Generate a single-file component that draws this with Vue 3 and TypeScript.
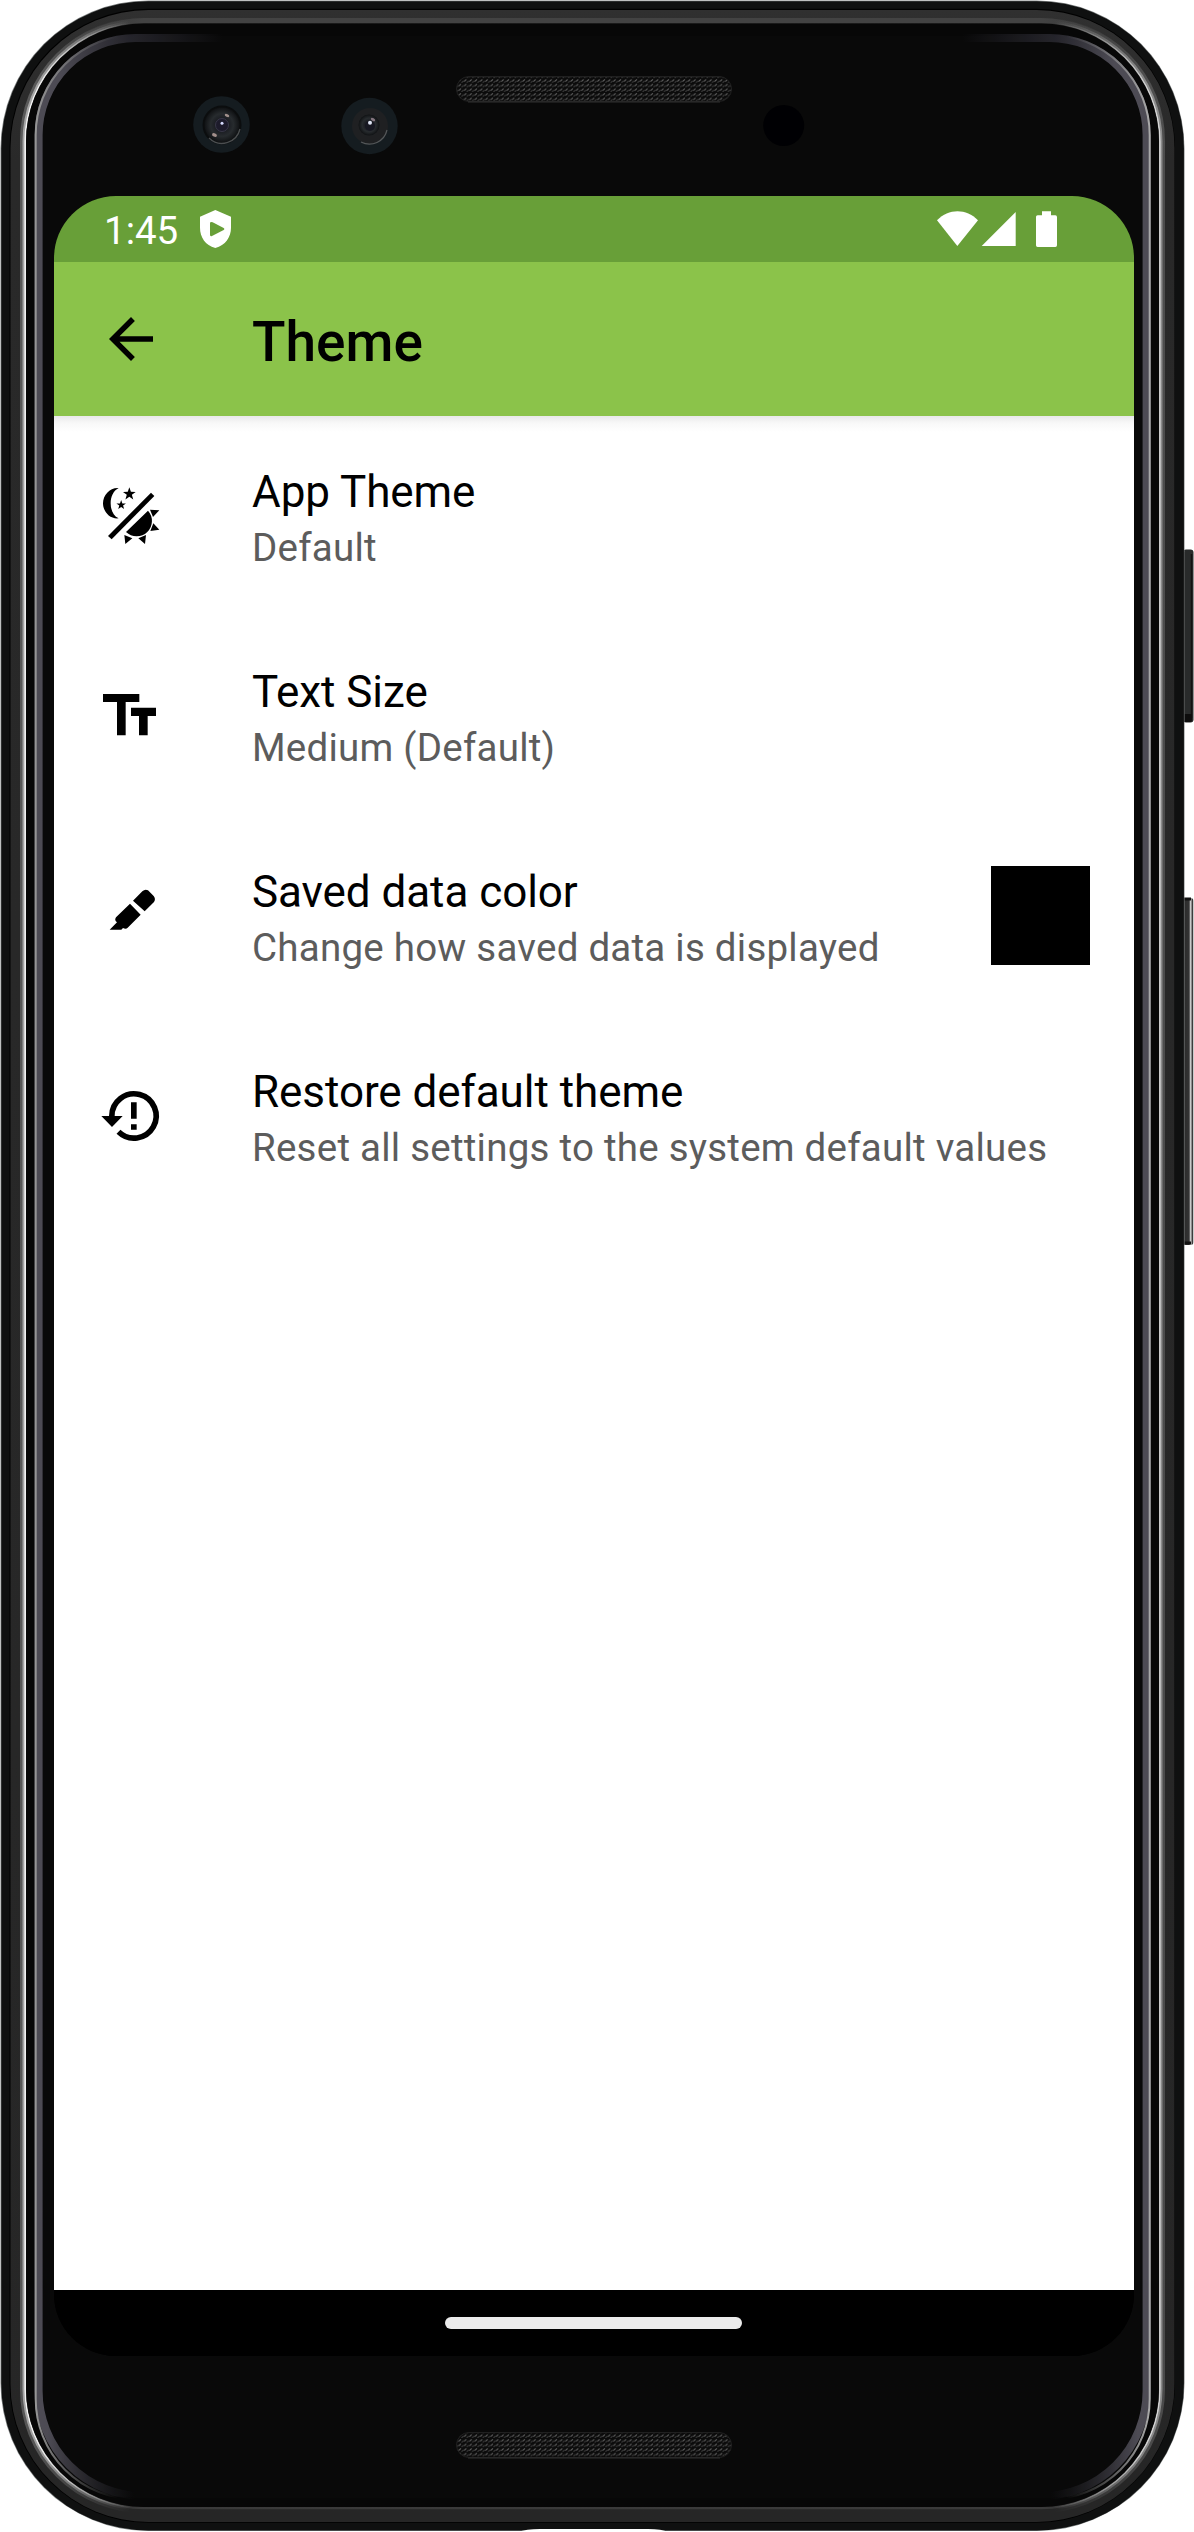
<script setup lang="ts">
interface Preference {
  id: string
  title: string
  summary: string
  swatch?: string
}

const preferences: Preference[] = [
  { id: 'theme', title: 'App Theme', summary: 'Default' },
  { id: 'text', title: 'Text Size', summary: 'Medium (Default)' },
  { id: 'color', title: 'Saved data color', summary: 'Change how saved data is displayed', swatch: '#000000' },
  { id: 'restore', title: 'Restore default theme', summary: 'Reset all settings to the system default values' },
]

const star = (cx: number, cy: number, r: number): string =>
  Array.from({ length: 10 }, (_, i) => {
    const radius = i % 2 === 0 ? r : r * 0.4
    const angle = -Math.PI / 2 + (i * Math.PI) / 5
    return `${(cx + radius * Math.cos(angle)).toFixed(2)},${(cy + radius * Math.sin(angle)).toFixed(2)}`
  }).join(' ')
</script>

<template>
  <div class="device">
    <svg class="hardware" viewBox="0 0 1194 2532" width="1194" height="2532" aria-hidden="true">
      <defs>
        <linearGradient id="edgeShine" gradientUnits="userSpaceOnUse" x1="0" y1="0" x2="1185" y2="0">
          <stop offset="0" stop-color="#fff" stop-opacity="0.95" />
          <stop offset="0.03" stop-color="#fff" stop-opacity="0.9" />
          <stop offset="0.11" stop-color="#fff" stop-opacity="0" />
          <stop offset="0.89" stop-color="#fff" stop-opacity="0" />
          <stop offset="0.97" stop-color="#fff" stop-opacity="0.7" />
          <stop offset="1" stop-color="#fff" stop-opacity="0.7" />
        </linearGradient>
        <linearGradient id="railTop" gradientUnits="userSpaceOnUse" x1="0" y1="0" x2="1185" y2="0">
          <stop offset="0.05" stop-color="#434343" stop-opacity="0" />
          <stop offset="0.12" stop-color="#434343" />
          <stop offset="0.88" stop-color="#434343" />
          <stop offset="0.95" stop-color="#434343" stop-opacity="0" />
        </linearGradient>
        <linearGradient id="glassTop" gradientUnits="userSpaceOnUse" x1="0" y1="0" x2="1185" y2="0">
          <stop offset="0.05" stop-color="#55535d" />
          <stop offset="0.11" stop-color="#302f38" stop-opacity="0.8" />
          <stop offset="0.19" stop-color="#302f38" stop-opacity="0" />
          <stop offset="0.81" stop-color="#302f38" stop-opacity="0" />
          <stop offset="0.89" stop-color="#302f38" stop-opacity="0.8" />
          <stop offset="0.94" stop-color="#55535d" />
        </linearGradient>
        <linearGradient id="glassBottom" gradientUnits="userSpaceOnUse" x1="0" y1="0" x2="1185" y2="0">
          <stop offset="0.04" stop-color="#55535d" />
          <stop offset="0.115" stop-color="#302f38" stop-opacity="0" />
          <stop offset="0.885" stop-color="#302f38" stop-opacity="0" />
          <stop offset="0.96" stop-color="#55535d" />
        </linearGradient>
        <linearGradient id="glassShine" gradientUnits="userSpaceOnUse" x1="0" y1="0" x2="1185" y2="0">
          <stop offset="0.03" stop-color="#a5a5a5" />
          <stop offset="0.1" stop-color="#777" stop-opacity="0" />
          <stop offset="0.9" stop-color="#999" stop-opacity="0" />
          <stop offset="0.97" stop-color="#bbb" />
        </linearGradient>
        <linearGradient id="rail" x1="0" y1="0" x2="0" y2="1">
          <stop offset="0" stop-color="#303030" />
          <stop offset="0.06" stop-color="#292929" />
          <stop offset="1" stop-color="#262626" />
        </linearGradient>
        <linearGradient id="volumeKey" x1="0" y1="0" x2="1" y2="0">
          <stop offset="0" stop-color="#2a2a2a" />
          <stop offset="0.58" stop-color="#333" />
          <stop offset="0.72" stop-color="#d0d0d0" />
          <stop offset="0.84" stop-color="#777" />
          <stop offset="0.86" stop-color="#111" />
          <stop offset="1" stop-color="#999" />
        </linearGradient>
        <radialGradient id="lens">
          <stop offset="0" stop-color="#3a3d4c" />
          <stop offset="0.3" stop-color="#181a20" />
          <stop offset="0.65" stop-color="#272b2e" />
          <stop offset="1" stop-color="#101214" />
        </radialGradient>
        <pattern id="mesh" width="5.33" height="4.6" patternUnits="userSpaceOnUse">
          <rect width="5.33" height="4.6" fill="#0b0b0b" />
          <path d="M0.4 3.4 L2.6 1.2" stroke="#666" stroke-width="1.1" />
          <path d="M3.1 4.6 L5 2.7" stroke="#3a3a3a" stroke-width="1.1" />
        </pattern>
      </defs>

      <rect x="1183" y="549.5" width="10.5" height="173" rx="3" fill="#292b2b" />
      <path d="M1184 552v168" stroke="#191919" stroke-width="2" />
      <path d="M1191.5 554v164" stroke="#111" stroke-width="1.4" />
      <path d="M1184 714h8v6q0 2-2 2h-6z" fill="#0d0d0d" />
      <rect x="1183" y="898" width="10.5" height="347" rx="3" fill="url(#volumeKey)" />
      <path d="M1184 899h7M1184 1243h7" stroke="#111" stroke-width="3" />

      <rect x="0.5" y="0.5" width="1184" height="2530.5" rx="148" fill="#7d8080" />
      <rect x="1.3" y="1.2" width="1182.6" height="2529.2" rx="147" fill="#0f1010" />
      <rect x="9.5" y="8.8" width="1165.5" height="2514" rx="139" fill="#000" />
      <rect x="10.5" y="10" width="1164" height="2512" rx="138" fill="url(#rail)" />
      <g fill="none" stroke="url(#railTop)">
        <path d="M23.500 1266V141.500A121 121 0 0 1 144.500 20.500H1040.500A121 121 0 0 1 1161.500 141.500V1266" stroke-width="5" />
        <path d="M25 1266V2389A119 119 0 0 0 144 2508H1041A119 119 0 0 0 1160 2389V1266" stroke-width="2.4" opacity="0.7" />
      </g>
      <g fill="none" stroke="url(#edgeShine)">
        <rect x="22.5" y="20" width="1140" height="2490.5" rx="121" stroke-width="5" opacity="0.24" />
        <rect x="24" y="21.5" width="1137" height="2487.5" rx="120" stroke-width="3" opacity="0.5" />
        <rect x="25.2" y="22.8" width="1134.6" height="2485" rx="119" stroke-width="1.6" />
      </g>
      <rect x="26" y="23.5" width="1133" height="2483.5" rx="118" fill="#070707" />
      <rect x="36" y="36" width="1114" height="2462" rx="98" fill="#090909" />
      <g fill="none" class="glass">
        <path d="M38.600 1266V135A97 97 0 0 1 135.600 38H1049.600A97 97 0 0 1 1146.600 135V1266" stroke="url(#glassTop)" stroke-width="8" />
        <path d="M38.600 1266V2391A105 105 0 0 0 143.600 2496H1041.600A105 105 0 0 0 1146.600 2391V1266" stroke="url(#glassBottom)" stroke-width="8" />
        <rect x="35.7" y="35" width="1114" height="2464" rx="100" stroke="url(#glassShine)" stroke-width="2" />
      </g>
      <path d="M518 2532q8-3 22-3h108q14 0 20 3z" fill="#fff" />

      <g stroke="#202020" fill="url(#mesh)">
        <rect x="456.5" y="76.5" width="275" height="25" rx="12.5" />
        <rect x="456.5" y="2432.5" width="275" height="25" rx="12.5" />
      </g>
      <path d="M468 102H720M468 2458H720" stroke="#303030" />

      <g>
        <circle cx="221.5" cy="124.5" r="28.3" fill="#151c20" />
        <circle cx="222" cy="125" r="19.5" fill="#0b0d0e" />
        <circle cx="222" cy="125" r="17.5" fill="url(#lens)" />
        <path d="M209 138a18.5 18.5 0 0 0 31-9" fill="none" stroke="#4b4e50" stroke-width="1.4" />
        <circle cx="222" cy="125" r="6.5" fill="#1d1b2b" stroke="#383748" />
        <ellipse cx="227" cy="115.5" rx="2.4" ry="1.3" fill="#a08f8b" transform="rotate(25 227 115.5)" />
        <ellipse cx="214.5" cy="135" rx="2.6" ry="1.7" fill="#a3908c" transform="rotate(25 214.5 135)" />
        <circle cx="222" cy="123.3" r="1.5" fill="#d7dcff" />
      </g>
      <g>
        <circle cx="369.5" cy="126" r="28.2" fill="#151c20" />
        <circle cx="370" cy="126" r="18" fill="#1f2022" />
        <path d="M361 142a18 18 0 0 0 26-12" fill="none" stroke="#55585a" stroke-width="1.2" />
        <circle cx="369" cy="125" r="10.5" fill="url(#lens)" />
        <circle cx="370" cy="126" r="5" fill="#171822" />
        <ellipse cx="373" cy="119.5" rx="2.4" ry="1.3" fill="#84757f" transform="rotate(30 373 119.5)" />
        <circle cx="370" cy="122.8" r="2" fill="#dfe4f4" />
      </g>
      <circle cx="783.7" cy="125.5" r="20.5" fill="#000003" />
    </svg>

    <main class="screen">
      <div class="status">
        <span class="clock">1:45</span>
        <svg class="shield" viewBox="600 631 93 114" width="31" height="38">
          <path fill="#fff" fill-rule="evenodd" d="M646 631L693 651V684C693 712 676 737 646 745C616 737 600 712 600 684V651ZM630 669V706Q631 711 636 709L671 691Q675 688 671 685L638 668Q632 665 630 669Z" />
        </svg>
        <svg class="signals" viewBox="429 632 361 109" width="120.33" height="36.33" fill="#fff">
          <path d="M429 660C464 624 517 624 552 660L490 737Z" />
          <path d="M665 635V737H563Z" />
          <path d="M744 633H771V645H784Q789 645 789 650V735Q789 740 784 740H731Q726 740 726 735V650Q726 645 731 645H744Z" />
        </svg>
      </div>

      <header class="appbar">
        <svg class="icon" viewBox="0 0 24 24">
          <path d="M20 11H7.83l5.59-5.59L12 4l-8 8 8 8 1.41-1.41L7.83 13H20v-2z" />
        </svg>
        <h1>Theme</h1>
      </header>

      <ul class="list">
        <li v-for="item in preferences" :key="item.id" class="row">
          <svg v-if="item.id === 'theme'" class="icon" viewBox="54 69 198 198">
            <path d="M116 84C90 82 69 105 69 130C69 155 90 178 116 175C100 168 92 150 92 130C92 110 100 92 116 84Z" />
            <polygon :points="star(148, 102, 20)" />
            <polygon :points="star(123.5, 135, 15)" />
            <path d="M213 98L223 108L95 238L84 228Z" />
            <path d="M204 152A46 46 0 0 1 138 216Z" />
            <path d="M210 149L238 151L219 171ZM220 190L238 209L211 213ZM133 225L157 235L136 252ZM175 235L198 225L195 252Z" />
          </svg>
          <svg v-else-if="item.id === 'text'" class="icon" viewBox="54 669 198 198">
            <path d="M69 702H178V726H137V826H111V726H69ZM153 743H228V768H203V826H177V768H153Z" />
          </svg>
          <svg v-else-if="item.id === 'color'" class="icon" viewBox="54 99 198 198">
            <path d="M159 152L187 124Q195 116 204 121L221 138Q228 147 222 156L194 184Z" />
            <path d="M150 161L182 194L143 233Q138 239 129 234L124 239.500H89L111 217Q102 211 108 202Z" />
          </svg>
          <svg v-else class="icon" viewBox="54 699 198 198">
            <path d="M95.500 798A66.500 66.500 0 1 1 115.500 845.500" fill="none" stroke="#000" stroke-width="17" />
            <path d="M64 798H128L96 831ZM153 757H170V806H153ZM153 823H170V839H153Z" />
          </svg>
          <div class="label">
            <div class="title">{{ item.title }}</div>
            <div class="summary">{{ item.summary }}</div>
          </div>
          <span v-if="item.swatch" class="swatch" :style="{ background: item.swatch }"></span>
        </li>
      </ul>

      <nav class="navbar"><span class="handle"></span></nav>
    </main>
  </div>
</template>

<style>
body {
  background: #fff;
}
</style>

<style scoped>
.device {
  position: relative;
  box-sizing: border-box;
  width: 1194px;
  height: 2532px;
  padding: 196px 60px 176px 54px;
  overflow: hidden;
  font-family: Roboto, sans-serif;
}
.hardware {
  position: absolute;
  top: 0;
  left: 0;
}
.screen {
  position: relative;
  display: flex;
  flex-direction: column;
  width: 1080px;
  height: 2160px;
  border-radius: 62px;
  overflow: hidden;
  background: #000;
  color: #000;
}
.status {
  display: flex;
  flex: none;
  align-items: flex-start;
  box-sizing: border-box;
  height: 66px;
  padding: 14px 77px 0 50px;
  background: #689f38;
  color: #fff;
}
.clock {
  width: 96px;
  font-size: 38.5px;
  line-height: 41px;
}
.signals {
  margin-left: auto;
  margin-top: 1px;
}
.appbar {
  display: flex;
  flex: none;
  align-items: center;
  height: 154px;
  padding-left: 44px;
  background: #8bc34a;
}
.icon {
  flex: none;
  width: 66px;
  height: 66px;
  fill: #000;
}
.appbar h1 {
  margin: 6px 0 0 88px;
  font-size: 55px;
  font-weight: 500;
  line-height: 64px;
}
.list {
  flex: 1;
  margin: 0;
  padding: 0;
  list-style: none;
  background: linear-gradient(#e9e9e9, #f8f8f8 7px, #fff 16px);
}
.row {
  display: flex;
  align-items: center;
  height: 200px;
  padding: 0 44px;
}
.label {
  flex: 1;
  margin: 8px 0 0 88px;
  white-space: nowrap;
}
.title {
  font-size: 44px;
  line-height: 55px;
  letter-spacing: -0.06px;
}
.summary {
  font-size: 38.5px;
  line-height: 56px;
  letter-spacing: 0.24px;
  color: #5c5c5c;
}
.swatch {
  width: 99px;
  height: 99px;
  margin-bottom: 1px;
}
.navbar {
  display: flex;
  flex: none;
  align-items: center;
  justify-content: center;
  height: 66px;
  background: #000;
}
.handle {
  width: 297px;
  height: 12px;
  margin-right: 1px;
  border-radius: 6px;
  background: #ebebeb;
}
.glass {
  opacity: 0.9;
}
</style>
